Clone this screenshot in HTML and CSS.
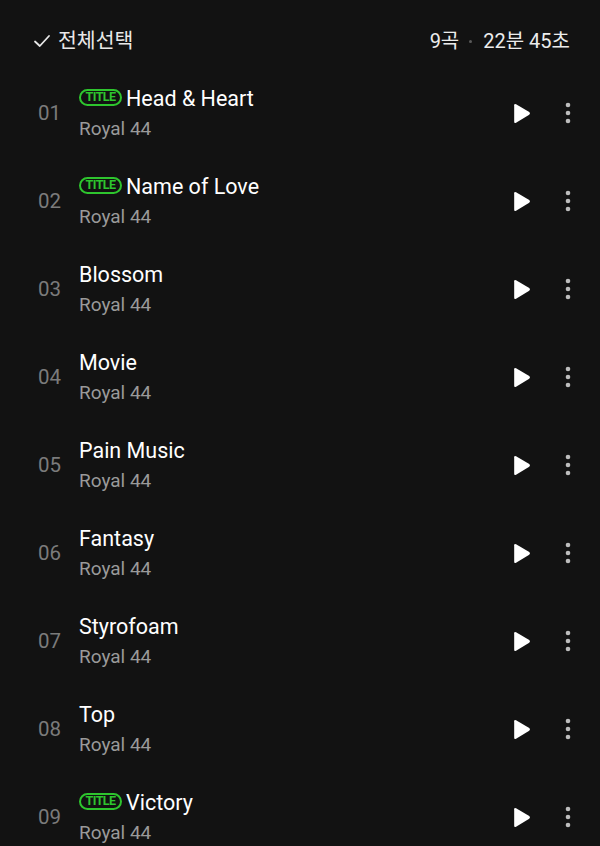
FILE: index.html
```html
<!DOCTYPE html>
<html lang="ko">
<head>
<meta charset="utf-8">
<link rel="stylesheet" href="styles.css">
</head>
<body>
<div class="page">
  <header class="head">
    <div class="select">
      <svg class="check" width="18" height="18" viewBox="0 0 18 18"><path d="M2 9.5 L6.8 14 L16 4" fill="none" stroke="#e8e8e8" stroke-width="1.8" stroke-linecap="round" stroke-linejoin="round"/></svg>
      <span>전체선택</span>
    </div>
    <div class="summary"><span>9곡</span><span class="dot"></span><span>22분 45초</span></div>
  </header>
  <ul class="list">
    <li class="row"><span class="num">01</span><div class="info"><div class="title"><span class="badge">TITLE</span>Head &amp; Heart</div><div class="artist">Royal 44</div></div><div class="actions"><svg class="play" viewBox="0 0 20 22"><path d="M3 3.2 Q3 1.2 4.8 2.2 L17.4 9.6 Q19 10.9 17.4 12.2 L4.8 19.8 Q3 20.8 3 18.8 Z" fill="#fff"/></svg><svg class="more" viewBox="0 0 6 22"><circle cx="3" cy="3" r="2.3" fill="#bdbdbd"/><circle cx="3" cy="11" r="2.3" fill="#bdbdbd"/><circle cx="3" cy="19" r="2.3" fill="#bdbdbd"/></svg></div></li>
    <li class="row"><span class="num">02</span><div class="info"><div class="title"><span class="badge">TITLE</span>Name of Love</div><div class="artist">Royal 44</div></div><div class="actions"><svg class="play" viewBox="0 0 20 22"><path d="M3 3.2 Q3 1.2 4.8 2.2 L17.4 9.6 Q19 10.9 17.4 12.2 L4.8 19.8 Q3 20.8 3 18.8 Z" fill="#fff"/></svg><svg class="more" viewBox="0 0 6 22"><circle cx="3" cy="3" r="2.3" fill="#bdbdbd"/><circle cx="3" cy="11" r="2.3" fill="#bdbdbd"/><circle cx="3" cy="19" r="2.3" fill="#bdbdbd"/></svg></div></li>
    <li class="row"><span class="num">03</span><div class="info"><div class="title">Blossom</div><div class="artist">Royal 44</div></div><div class="actions"><svg class="play" viewBox="0 0 20 22"><path d="M3 3.2 Q3 1.2 4.8 2.2 L17.4 9.6 Q19 10.9 17.4 12.2 L4.8 19.8 Q3 20.8 3 18.8 Z" fill="#fff"/></svg><svg class="more" viewBox="0 0 6 22"><circle cx="3" cy="3" r="2.3" fill="#bdbdbd"/><circle cx="3" cy="11" r="2.3" fill="#bdbdbd"/><circle cx="3" cy="19" r="2.3" fill="#bdbdbd"/></svg></div></li>
    <li class="row"><span class="num">04</span><div class="info"><div class="title">Movie</div><div class="artist">Royal 44</div></div><div class="actions"><svg class="play" viewBox="0 0 20 22"><path d="M3 3.2 Q3 1.2 4.8 2.2 L17.4 9.6 Q19 10.9 17.4 12.2 L4.8 19.8 Q3 20.8 3 18.8 Z" fill="#fff"/></svg><svg class="more" viewBox="0 0 6 22"><circle cx="3" cy="3" r="2.3" fill="#bdbdbd"/><circle cx="3" cy="11" r="2.3" fill="#bdbdbd"/><circle cx="3" cy="19" r="2.3" fill="#bdbdbd"/></svg></div></li>
    <li class="row"><span class="num">05</span><div class="info"><div class="title">Pain Music</div><div class="artist">Royal 44</div></div><div class="actions"><svg class="play" viewBox="0 0 20 22"><path d="M3 3.2 Q3 1.2 4.8 2.2 L17.4 9.6 Q19 10.9 17.4 12.2 L4.8 19.8 Q3 20.8 3 18.8 Z" fill="#fff"/></svg><svg class="more" viewBox="0 0 6 22"><circle cx="3" cy="3" r="2.3" fill="#bdbdbd"/><circle cx="3" cy="11" r="2.3" fill="#bdbdbd"/><circle cx="3" cy="19" r="2.3" fill="#bdbdbd"/></svg></div></li>
    <li class="row"><span class="num">06</span><div class="info"><div class="title">Fantasy</div><div class="artist">Royal 44</div></div><div class="actions"><svg class="play" viewBox="0 0 20 22"><path d="M3 3.2 Q3 1.2 4.8 2.2 L17.4 9.6 Q19 10.9 17.4 12.2 L4.8 19.8 Q3 20.8 3 18.8 Z" fill="#fff"/></svg><svg class="more" viewBox="0 0 6 22"><circle cx="3" cy="3" r="2.3" fill="#bdbdbd"/><circle cx="3" cy="11" r="2.3" fill="#bdbdbd"/><circle cx="3" cy="19" r="2.3" fill="#bdbdbd"/></svg></div></li>
    <li class="row"><span class="num">07</span><div class="info"><div class="title">Styrofoam</div><div class="artist">Royal 44</div></div><div class="actions"><svg class="play" viewBox="0 0 20 22"><path d="M3 3.2 Q3 1.2 4.8 2.2 L17.4 9.6 Q19 10.9 17.4 12.2 L4.8 19.8 Q3 20.8 3 18.8 Z" fill="#fff"/></svg><svg class="more" viewBox="0 0 6 22"><circle cx="3" cy="3" r="2.3" fill="#bdbdbd"/><circle cx="3" cy="11" r="2.3" fill="#bdbdbd"/><circle cx="3" cy="19" r="2.3" fill="#bdbdbd"/></svg></div></li>
    <li class="row"><span class="num">08</span><div class="info"><div class="title">Top</div><div class="artist">Royal 44</div></div><div class="actions"><svg class="play" viewBox="0 0 20 22"><path d="M3 3.2 Q3 1.2 4.8 2.2 L17.4 9.6 Q19 10.9 17.4 12.2 L4.8 19.8 Q3 20.8 3 18.8 Z" fill="#fff"/></svg><svg class="more" viewBox="0 0 6 22"><circle cx="3" cy="3" r="2.3" fill="#bdbdbd"/><circle cx="3" cy="11" r="2.3" fill="#bdbdbd"/><circle cx="3" cy="19" r="2.3" fill="#bdbdbd"/></svg></div></li>
    <li class="row"><span class="num">09</span><div class="info"><div class="title"><span class="badge">TITLE</span>Victory</div><div class="artist">Royal 44</div></div><div class="actions"><svg class="play" viewBox="0 0 20 22"><path d="M3 3.2 Q3 1.2 4.8 2.2 L17.4 9.6 Q19 10.9 17.4 12.2 L4.8 19.8 Q3 20.8 3 18.8 Z" fill="#fff"/></svg><svg class="more" viewBox="0 0 6 22"><circle cx="3" cy="3" r="2.3" fill="#bdbdbd"/><circle cx="3" cy="11" r="2.3" fill="#bdbdbd"/><circle cx="3" cy="19" r="2.3" fill="#bdbdbd"/></svg></div></li>
  </ul>
</div>
</body>
</html>
```

FILE: styles.css
```css
* { box-sizing: border-box; }
html, body {
  margin: 0;
  padding: 0;
  background: #121212;
  height: 100%;
  overflow: hidden;
}
body {
  font-family: Roboto, "Noto Sans CJK KR", sans-serif;
  color: #fff;
}
.page { width: 600px; }
.head {
  display: flex;
  justify-content: space-between;
  align-items: center;
  height: 69px;
  padding: 29px 30px 16px 33px;
}
.select {
  display: flex;
  align-items: center;
  gap: 7px;
  font-size: 20.5px;
  color: #e8e8e8;
  line-height: 24px;
}
.check { width: 18px; height: 18px; display: block; }
.summary {
  display: flex;
  align-items: center;
  font-size: 20px;
  line-height: 24px;
  color: #ececec;
}
.dot {
  width: 3px;
  height: 3px;
  border-radius: 50%;
  background: #5a5a5a;
  margin: 1px 11px 0 10px;
}
.list { list-style: none; margin: 0; padding: 0; }
.row {
  display: flex;
  align-items: center;
  height: 88px;
  padding: 0 29px 0 38px;
}
.num {
  width: 41px;
  font-size: 20.5px;
  color: #7b7b7b;
  line-height: 30px;
}
.info { flex: 1; display: flex; flex-direction: column; padding-top: 2px; }
.title {
  display: flex;
  align-items: center;
  font-size: 21.5px;
  line-height: 30px;
  color: #fff;
}
.badge {
  display: inline-flex;
  align-items: center;
  justify-content: center;
  width: 43px;
  height: 17px;
  margin-right: 4px;
  margin-top: -3px;
  border: 2px solid #2ec52e;
  border-radius: 9px;
  color: #2ec52e;
  font-size: 12.5px;
  font-weight: 700;
  line-height: 1;
  letter-spacing: -0.6px;
}
.artist {
  font-size: 19px;
  line-height: 30px;
  color: #9a9a9a;
}
.actions {
  display: flex;
  align-items: center;
  gap: 33px;
}
.play { width: 21px; height: 23px; display: block; }
.more { width: 6px; height: 22px; display: block; }
```
